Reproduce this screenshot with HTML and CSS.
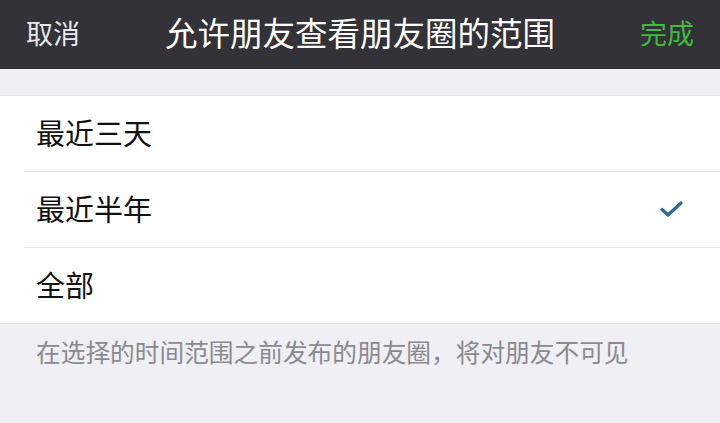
FILE: index.html
```html
<!DOCTYPE html>
<html lang="zh-CN">
<head>
    <meta charset="UTF-8">
    <meta name="viewport" content="width=device-width, initial-scale=1.0">
    <title>允许朋友查看朋友圈的范围</title>
    <link rel="stylesheet" href="styles.css">
</head>
<body>
    <header class="nav-bar">
        <span class="nav-btn nav-cancel">取消</span>
        <h1 class="nav-title">允许朋友查看朋友圈的范围</h1>
        <span class="nav-btn nav-done">完成</span>
    </header>

    <main>
        <ul class="option-list">
            <li class="option-item">
                <span class="option-text">最近三天</span>
            </li>
            <li class="option-item">
                <span class="option-text">最近半年</span>
                <svg class="check-icon" width="24" height="18" viewBox="0 0 24 18">
                    <path d="M2 8.5 L8 14 L21 2" fill="none" stroke="#2a6b9c" stroke-width="3.2" stroke-linecap="round" stroke-linejoin="round"/>
                </svg>
            </li>
            <li class="option-item">
                <span class="option-text">全部</span>
            </li>
        </ul>
        <p class="option-tip">在选择的时间范围之前发布的朋友圈，将对朋友不可见</p>
    </main>
</body>
</html>
```

FILE: styles.css
```css
/* 朋友圈可见范围设置 */
body {
    margin: 0;
    padding: 0;
    font-family: "Noto Sans CJK SC", "Noto Sans", sans-serif;
    background-color: #efeff4;
    color: #111;
}

.nav-bar {
    height: 69px;
    background-color: #333238;
    display: flex;
    align-items: center;
    justify-content: space-between;
    padding: 0 26px 4px 26px;
    box-sizing: border-box;
}

.nav-btn {
    font-size: 27px;
    line-height: 1;
}

.nav-cancel {
    color: #e8e8ea;
}

.nav-done {
    color: #3fbd3a;
}

.nav-title {
    margin: 0;
    font-size: 32.5px;
    font-weight: 400;
    color: #fff;
    line-height: 1;
}

main {
    padding-top: 26px;
}

.option-list {
    list-style: none;
    margin: 0;
    padding: 0 0 0 24px;
    background-color: #fff;
    border-top: 1px solid #e0e0e4;
    border-bottom: 1px solid #e0e0e4;
}

.option-item {
    height: 75px;
    display: flex;
    align-items: center;
    justify-content: space-between;
    padding: 0 36px 0 12px;
    border-bottom: 1px solid #e4e4e8;
}

.option-item:last-child {
    border-bottom: none;
}

.option-text {
    font-size: 29px;
    line-height: 1;
    padding-bottom: 3px;
}

.check-icon {
    display: block;
}

.option-tip {
    margin: 0;
    padding: 13px 36px;
    font-size: 24.7px;
    line-height: 1.2;
    color: #8a8a8f;
}
```
